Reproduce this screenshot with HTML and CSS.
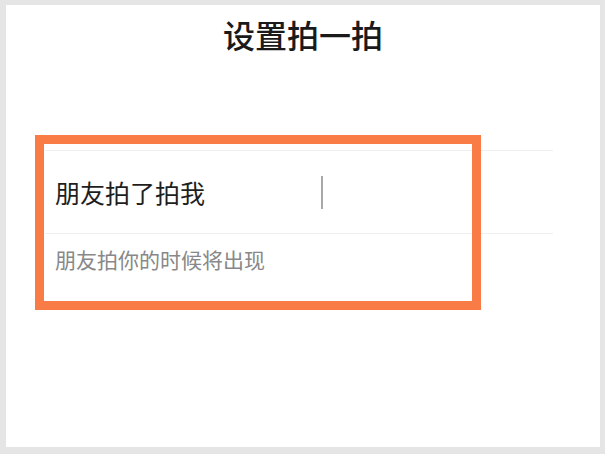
FILE: index.html
```html
<!DOCTYPE html>
<html lang="zh-CN">
<head>
<meta charset="utf-8">
<title>设置拍一拍</title>
<link rel="stylesheet" href="styles.css">
</head>
<body>
<div class="panel">
  <h1 class="title">设置拍一拍</h1>
  <div class="form">
    <div class="input-row">
      <span class="label">朋友拍了拍我</span>
      <span class="cursor"></span>
    </div>
    <div class="hint">朋友拍你的时候将出现</div>
  </div>
  <div class="highlight"></div>
</div>
</body>
</html>
```

FILE: styles.css
```css
html, body {
  margin: 0;
  padding: 0;
}
body {
  background: #e5e5e5;
  width: 605px;
  height: 454px;
  box-sizing: border-box;
  padding: 5px 5px 7px 6px;
  font-family: "Noto Sans CJK SC", "Noto Sans", sans-serif;
  overflow: hidden;
}
.panel {
  position: relative;
  background: #ffffff;
  height: 442px;
  padding-top: 9px;
  box-sizing: border-box;
}
.title {
  margin: 0;
  font-size: 32px;
  line-height: 40px;
  font-weight: 500;
  color: #1a1a1a;
  text-align: center;
}
.form {
  margin: 96px 0 0 39px;
  width: 508px;
}
.input-row {
  display: flex;
  align-items: center;
  height: 82px;
  border-top: 1px solid #efefef;
  border-bottom: 1px solid #efefef;
  padding-left: 10px;
}
.label {
  flex: 0 0 266px;
  font-size: 25px;
  line-height: 25px;
  color: #1e1e1e;
}
.cursor {
  width: 2px;
  height: 33px;
  background: #a8a8a8;
}
.hint {
  padding: 15px 0 0 10px;
  font-size: 21px;
  line-height: 21px;
  color: #888888;
}
.highlight {
  position: absolute;
  left: 29px;
  top: 130px;
  width: 446px;
  height: 175px;
  box-sizing: border-box;
  border: 9px solid #f97b45;
}
```
